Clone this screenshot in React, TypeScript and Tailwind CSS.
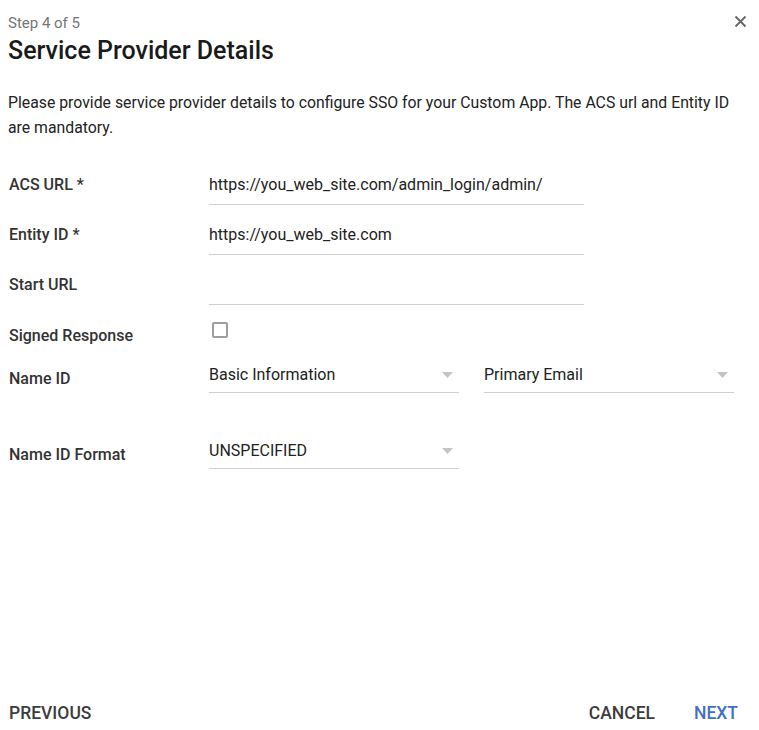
const font = { fontFamily: 'Roboto, "Liberation Sans", sans-serif' };

function Caret() {
  return (
    <svg width="11" height="6" viewBox="0 0 11 6" className="shrink-0">
      <path d="M0 0 L11 0 L5.5 6 Z" fill="#c4c4c4" />
    </svg>
  );
}

function Label({ children, className = '' }: { children: React.ReactNode; className?: string }) {
  return (
    <div className={`w-[209px] shrink-0 pl-[9px] text-[16px] font-medium text-[#333] ${className}`}>{children}</div>
  );
}

function TextField({ value }: { value?: string }) {
  return (
    <div className="flex h-10 w-[375px] items-center border-b border-[#cfcfcf] text-[16px] text-[#222]">
      {value}
    </div>
  );
}

function Select({ value, className = '' }: { value: string; className?: string }) {
  return (
    <div
      className={`flex h-9 w-[250px] items-center justify-between border-b border-[#cfcfcf] pr-[6px] text-[16px] text-[#222] ${className}`}
    >
      <span>{value}</span>
      <Caret />
    </div>
  );
}

export default function App() {
  return (
    <div className="flex h-[730px] w-[759px] flex-col bg-white" style={font}>
      <div className="relative px-[8px] pt-[13px]">
        <div className="text-[15px] leading-[20px] text-[#757575]">Step 4 of 5</div>
        <h1 className="mt-[3px] text-[25px] font-medium leading-[30px] text-[#1a1a1a]">Service Provider Details</h1>
        <button className="absolute right-[12px] top-[15px] p-0 text-[#666]" aria-label="close">
          <svg width="13" height="13" viewBox="0 0 13 13">
            <path d="M1.5 1.5 L11.5 11.5 M11.5 1.5 L1.5 11.5" stroke="#666" strokeWidth="1.8" />
          </svg>
        </button>
        <p className="mt-[24px] pr-[8px] text-[15.8px] leading-[25px] text-[#222]">
          Please provide service provider details to configure SSO for your Custom App. The ACS url and Entity ID
          are mandatory.
        </p>
      </div>

      <div className="mt-[20px] flex flex-col">
        <div className="flex h-[50px] items-center">
          <Label>ACS URL *</Label>
          <TextField value="https://you_web_site.com/admin_login/admin/" />
        </div>
        <div className="flex h-[50px] items-center">
          <Label>Entity ID *</Label>
          <TextField value="https://you_web_site.com" />
        </div>
        <div className="flex h-[50px] items-center">
          <Label>Start URL</Label>
          <TextField />
        </div>
        <div className="flex h-[47px] items-center">
          <Label className="pt-1">Signed Response</Label>
          <div className="mb-[8px] ml-[3px] h-4 w-4 rounded-[2px] border-2 border-[#9e9e9e]" />
        </div>
        <div className="flex items-center">
          <Label className="pt-2">Name ID</Label>
          <Select value="Basic Information" />
          <Select value="Primary Email" className="ml-[25px]" />
        </div>
        <div className="mt-10 flex items-center">
          <Label className="pt-2">Name ID Format</Label>
          <Select value="UNSPECIFIED" />
        </div>
      </div>

      <div className="mt-auto flex items-center justify-between pl-[9px] pr-[21px] text-[17.5px] font-medium leading-[34px]">
        <button className="text-[#3c3c3c]">PREVIOUS</button>
        <div className="flex gap-[39px]">
          <button className="text-[#3c3c3c]">CANCEL</button>
          <button className="text-[#4470c4]">NEXT</button>
        </div>
      </div>
    </div>
  );
}
